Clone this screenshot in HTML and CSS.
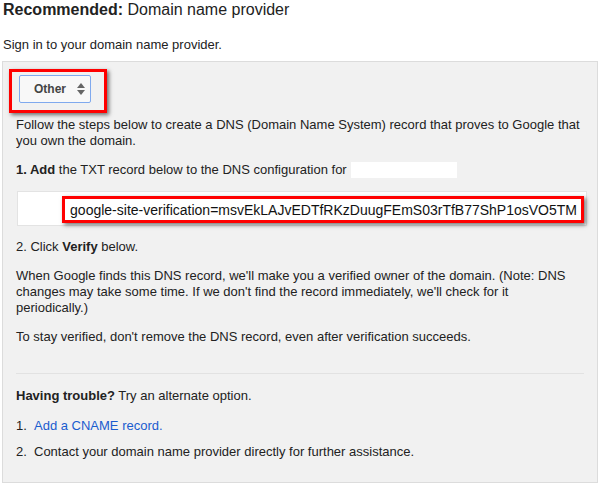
FILE: index.html
```html
<!DOCTYPE html>
<html lang="en">
<head>
    <meta charset="UTF-8">
    <title>Verify your domain</title>
    <link rel="stylesheet" href="styles.css">
</head>
<body>

    <h2 class="title"><b>Recommended:</b> Domain name provider</h2>

    <p class="intro">Sign in to your domain name provider.</p>

    <div class="panel">
        <div class="mark mark-select">
            <div class="select">
                <span>Other</span>
                <svg class="arrows" width="8" height="12" viewBox="0 0 8 12">
                    <path d="M4 0 L8 5 L0 5 Z" fill="#666"/>
                    <path d="M0 7 L8 7 L4 12 Z" fill="#666"/>
                </svg>
            </div>
        </div>

        <p class="first">Follow the steps below to create a DNS (Domain Name System) record that proves to Google that you own the domain.</p>

        <p><b>1. Add</b> the TXT record below to the DNS configuration for <span class="hidden-domain"></span></p>

        <div class="txt-box">
            <span class="mark mark-txt">google-site-verification=msvEkLAJvEDTfRKzDuugFEmS03rTfB77ShP1osVO5TM</span>
        </div>

        <p>2. Click <b>Verify</b> below.</p>

        <p>When Google finds this DNS record, we'll make you a verified owner of the domain. (Note: DNS changes may take some time. If we don't find the record immediately, we'll check for it periodically.)</p>

        <p>To stay verified, don't remove the DNS record, even after verification succeeds.</p>

        <hr class="divider">

        <p class="trouble"><b>Having trouble?</b> Try an alternate option.</p>

        <ol class="options">
            <li><a href="#">Add a CNAME record.</a></li>
            <li>Contact your domain name provider directly for further assistance.</li>
        </ol>
    </div>

</body>
</html>
```

FILE: styles.css
```css
body {
    margin: 0;
    padding: 0 3px;
    font-family: Arial, "Liberation Sans", sans-serif;
    font-size: 13px;
    color: #222;
    background-color: #fff;
}

.title {
    font-size: 16px;
    font-weight: normal;
    line-height: 20px;
    margin: 0;
}

.intro {
    margin: 17px 0 8px;
    line-height: 16px;
}

.panel {
    margin-left: -1px;
    width: 568px;
    padding: 0 13px 22px;
    background-color: #f1f1f1;
    border: 1px solid #dcdcdc;
}

.panel p {
    margin: 13px 0;
    line-height: 16px;
}

.panel p.first {
    margin-top: 4px;
}

/* red annotation boxes */
.mark {
    border: 3px solid #f00;
    box-shadow: 2px 2px 4px rgba(0, 0, 0, 0.55);
}

.mark-select {
    width: fit-content;
    margin: 7px 0 0 -7px;
    padding: 3px 13px 7px 7px;
}

.select {
    display: flex;
    align-items: center;
    gap: 11px;
    box-sizing: border-box;
    width: 72px;
    height: 28px;
    padding-left: 14px;
    border: 1px solid #7fa9ee;
    border-radius: 2px;
    background-color: #f8f8f8;
    color: #444;
    font-weight: bold;
    font-size: 12px;
}

.hidden-domain {
    display: inline-block;
    vertical-align: top;
    width: 106px;
    height: 16px;
    margin-left: 1px;
    background-color: #fff;
}

.txt-box {
    box-sizing: border-box;
    height: 35px;
    width: 570px;
    margin-left: 1px;
    padding: 4px 2px 0 0;
    background-color: #fff;
    border: 1px solid #e3e3e3;
    text-align: right;
}

.mark-txt {
    display: inline-block;
    padding: 2px 4px 1px 5px;
    font-size: 14px;
    line-height: 18px;
    color: #111;
    background-color: #fff;
}

.divider {
    margin: 28px 0 0;
    border: none;
    border-top: 1px solid #e2e2e2;
}

.panel p.trouble {
    margin-top: 14px;
}

.options {
    margin: 14px 0 0;
    padding: 0;
    list-style: none;
    counter-reset: item;
}

.options li {
    counter-increment: item;
    line-height: 16px;
    margin-bottom: 10px;
}

.options li::before {
    content: counter(item) ".";
    display: inline-block;
    width: 18px;
    color: #222;
}

.options li:last-child {
    margin-bottom: 0;
}

.options a {
    color: #1a5ccf;
    text-decoration: none;
}
```
